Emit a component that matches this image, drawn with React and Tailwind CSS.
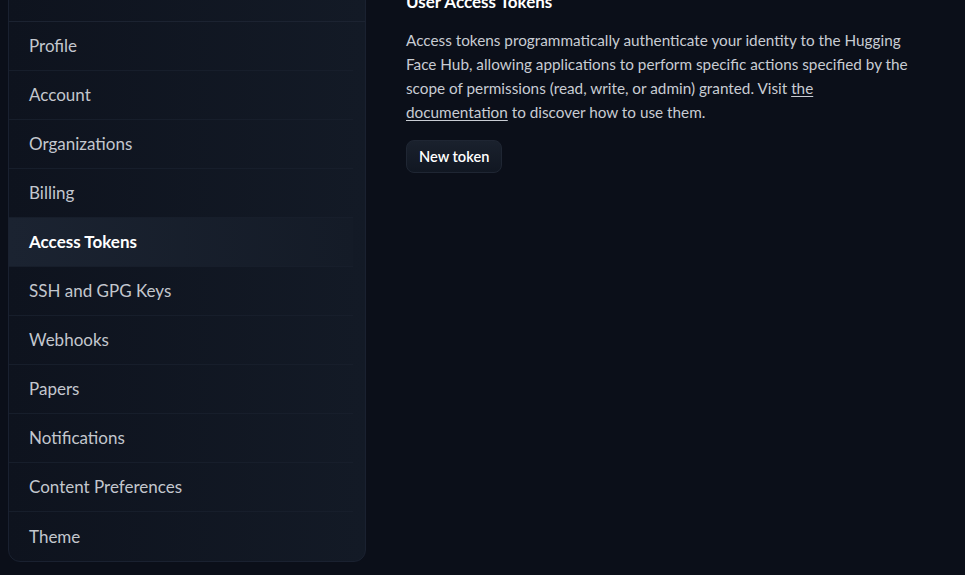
import React from "react";

const items = [
  "Profile",
  "Account",
  "Organizations",
  "Billing",
  "Access Tokens",
  "SSH and GPG Keys",
  "Webhooks",
  "Papers",
  "Notifications",
  "Content Preferences",
  "Theme",
];

export default function App() {
  const active = "Access Tokens";

  return (
    <div
      className="h-[575px] w-full overflow-hidden bg-[#0b0f19] flex items-start"
      style={{ fontFamily: "Lato, 'Noto Sans', sans-serif" }}
    >
      {/* Sidebar */}
      <aside className="ml-2 -mt-[27px] w-[358px] shrink-0 rounded-b-xl border border-[#1a2130] bg-gradient-to-r from-[#0e131e] to-[#131a26]">
        <div className="h-[48px] border-b border-[#1c2331]"></div>
        {items.map((item, i) => (
          <div
            key={item}
            className={
              "h-[49px] flex items-center pl-5 mr-3 text-[17px] " +
              (i < items.length - 1 ? "border-b border-[#171e2b] " : "") +
              (item === active
                ? "-mr-0 bg-gradient-to-r from-[#1b2331] to-[#141b27] text-white font-bold"
                : "text-[#c3c7ce]")
            }
          >
            {item}
          </div>
        ))}
      </aside>

      {/* Main */}
      <main className="ml-[40px] -mt-[10px] w-[540px]">
        <h3 className="text-[17px] font-bold text-white leading-6">User Access Tokens</h3>
        <p className="mt-[14px] text-[15.3px] leading-6 text-[#c8ccd3]">
          Access tokens programmatically authenticate your identity to the Hugging
          <br />
          Face Hub, allowing applications to perform specific actions specified by the
          <br />
          scope of permissions (read, write, or admin) granted. Visit{" "}
          <a href="#" className="underline underline-offset-2">
            the
            <br />
            documentation
          </a>{" "}
          to discover how to use them.
        </p>
        <button className="mt-[16px] h-[33px] px-3 rounded-lg border border-[#1f2633] bg-gradient-to-b from-[#1a212d] to-[#111722] text-[14.6px] font-semibold text-white">
          New token
        </button>
      </main>
    </div>
  );
}
